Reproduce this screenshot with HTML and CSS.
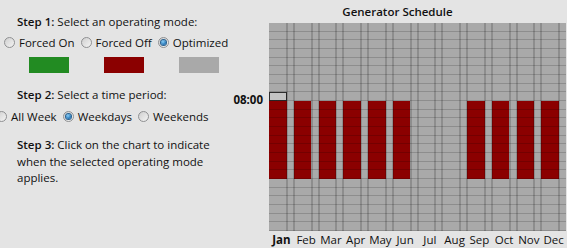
FILE: index.html
```html
<!DOCTYPE html>
<html>
<head>
<meta charset="utf-8">
<title>Generator Schedule</title>
<link rel="stylesheet" href="styles.css">
</head>
<body>
<div class="app">
  <div class="controls">
    <p class="step step1"><b>Step 1:</b> Select an operating mode:</p>
    <div class="radios modes">
      <label class="radio"><span class="dot"></span>Forced On</label>
      <label class="radio"><span class="dot"></span>Forced Off</label>
      <label class="radio checked"><span class="dot"></span>Optimized</label>
    </div>
    <div class="swatches">
      <span class="swatch on"></span>
      <span class="swatch off"></span>
      <span class="swatch opt"></span>
    </div>
    <p class="step step2"><b>Step 2:</b> Select a time period:</p>
    <div class="radios periods">
      <label class="radio"><span class="dot"></span>All Week</label>
      <label class="radio checked"><span class="dot"></span>Weekdays</label>
      <label class="radio"><span class="dot"></span>Weekends</label>
    </div>
    <p class="step step3"><b>Step 3:</b> Click on the chart to indicate<br>when the selected operating mode<br>applies.</p>
  </div>
  <div class="schedule">
    <div class="title">Generator Schedule</div>
    <div class="plot">
      <div class="yaxis"><span class="hour">08:00</span></div>
      <div class="chart">
        <div class="month"><span class="block"></span><span class="hover"></span></div>
        <div class="month"><span class="block"></span></div>
        <div class="month"><span class="block"></span></div>
        <div class="month"><span class="block"></span></div>
        <div class="month"><span class="block"></span></div>
        <div class="month"><span class="block"></span></div>
        <div class="month"></div>
        <div class="month"></div>
        <div class="month"><span class="block"></span></div>
        <div class="month"><span class="block"></span></div>
        <div class="month"><span class="block"></span></div>
        <div class="month"><span class="block"></span></div>
      </div>
    </div>
    <div class="months">
      <span class="mlabel current">Jan</span>
      <span class="mlabel">Feb</span>
      <span class="mlabel">Mar</span>
      <span class="mlabel">Apr</span>
      <span class="mlabel">May</span>
      <span class="mlabel">Jun</span>
      <span class="mlabel">Jul</span>
      <span class="mlabel">Aug</span>
      <span class="mlabel">Sep</span>
      <span class="mlabel">Oct</span>
      <span class="mlabel">Nov</span>
      <span class="mlabel">Dec</span>
    </div>
  </div>
</div>
</body>
</html>
```

FILE: styles.css
```css
html, body {
  margin: 0;
  padding: 0;
  background: #e4e4e4;
  overflow: hidden;
}

body {
  width: 567px;
  height: 248px;
  font-family: "Open Sans", "Noto Sans", sans-serif;
  font-size: 11.5px;
  color: #111;
}

.app {
  display: flex;
  height: 248px;
}

.controls {
  width: 230px;
  flex: none;
}

.step {
  margin: 0;
  padding-left: 17px;
  line-height: 16.5px;
  white-space: nowrap;
}

.step b {
  font-weight: 600;
}

.step1 {
  margin-top: 14px;
}

.step2 {
  margin-top: 14px;
}

.step3 {
  margin-top: 13px;
}

.radios {
  display: flex;
  align-items: center;
  height: 16px;
  margin-top: 4px;
  white-space: nowrap;
}

.modes {
  padding-left: 4px;
}

.periods {
  margin-left: -4px;
  margin-top: 5px;
}

.radio {
  display: flex;
  align-items: center;
  gap: 4px;
  margin-right: 6px;
}

.dot {
  width: 11px;
  height: 11px;
  box-sizing: border-box;
  border-radius: 50%;
  border: 1px solid #8f9092;
  background: linear-gradient(135deg, #cfcfcf, #f4f4f4);
  display: flex;
  align-items: center;
  justify-content: center;
  flex: none;
}

.checked .dot::after {
  content: "";
  width: 5px;
  height: 5px;
  border-radius: 50%;
  background: radial-gradient(circle at 40% 35%, #8ad0f8, #1d6fb3 70%);
  box-shadow: 0 0 0 1px #29618f;
}

.swatches {
  display: flex;
  gap: 35px;
  padding-left: 29px;
  margin-top: 6px;
}

.swatch {
  width: 40px;
  height: 16px;
}

.swatch.on { background: #228b22; }
.swatch.off { background: #8b0000; }
.swatch.opt { background: #a9a9a9; }

.schedule {
  flex: 1;
  display: flex;
  flex-direction: column;
}

.title {
  text-align: center;
  font-weight: 600;
  height: 23px;
  line-height: 23px;
  padding-right: 2px;
}

.plot {
  display: flex;
}

.yaxis {
  width: 39px;
  position: relative;
}

.hour {
  position: absolute;
  right: 6px;
  top: 69px;
  font-weight: 700;
  line-height: 16px;
}

.chart {
  width: 297px;
  height: 208px;
  display: grid;
  grid-template-columns: repeat(12, 1fr);
  background: #a9a9a9;
  position: relative;
}

.chart::after {
  content: "";
  position: absolute;
  inset: 0;
  pointer-events: none;
  background-image: repeating-linear-gradient(to bottom,
    transparent 0, transparent 7.667px,
    rgba(0, 0, 0, 0.17) 7.667px, rgba(0, 0, 0, 0.17) 8.667px);
}

.month {
  position: relative;
  display: grid;
  grid-template-columns: 5fr 2fr;
  grid-template-rows: repeat(24, 1fr);
}

.month::after {
  content: "";
  position: absolute;
  inset: 0;
  pointer-events: none;
  background-image:
    linear-gradient(to right,
      rgba(0, 0, 0, 0.17) 0, rgba(0, 0, 0, 0.17) 1px,
      transparent 1px, transparent calc(71.43% - 1px),
      rgba(0, 0, 0, 0.17) calc(71.43% - 1px), rgba(0, 0, 0, 0.17) calc(71.43% + 1px),
      transparent calc(71.43% + 1px), transparent calc(100% - 1px),
      rgba(0, 0, 0, 0.17) calc(100% - 1px));
}

.month:first-child::after {
  background-image:
    linear-gradient(to right,
      transparent 0, transparent calc(71.43% - 1px),
      rgba(0, 0, 0, 0.17) calc(71.43% - 1px), rgba(0, 0, 0, 0.17) calc(71.43% + 1px),
      transparent calc(71.43% + 1px), transparent calc(100% - 1px),
      rgba(0, 0, 0, 0.17) calc(100% - 1px));
}

.month:last-child::after {
  background-image:
    linear-gradient(to right,
      rgba(0, 0, 0, 0.17) 0, rgba(0, 0, 0, 0.17) 1px,
      transparent 1px, transparent calc(71.43% - 1px),
      rgba(0, 0, 0, 0.17) calc(71.43% - 1px), rgba(0, 0, 0, 0.17) calc(71.43% + 1px),
      transparent calc(71.43% + 1px));
}

.block {
  grid-column: 1;
  grid-row: 10 / 19;
  background: #8b0000;
}

.hover {
  grid-column: 1;
  grid-row: 9;
  border: 1px solid #2e2e2e;
  background: #c4c4c4;
}

.months {
  display: grid;
  grid-template-columns: repeat(12, 24.75px);
  margin-left: 39px;
  height: 17px;
  line-height: 17px;
}

.mlabel {
  text-align: center;
  white-space: nowrap;
}

.mlabel.current {
  font-weight: 700;
}
```
